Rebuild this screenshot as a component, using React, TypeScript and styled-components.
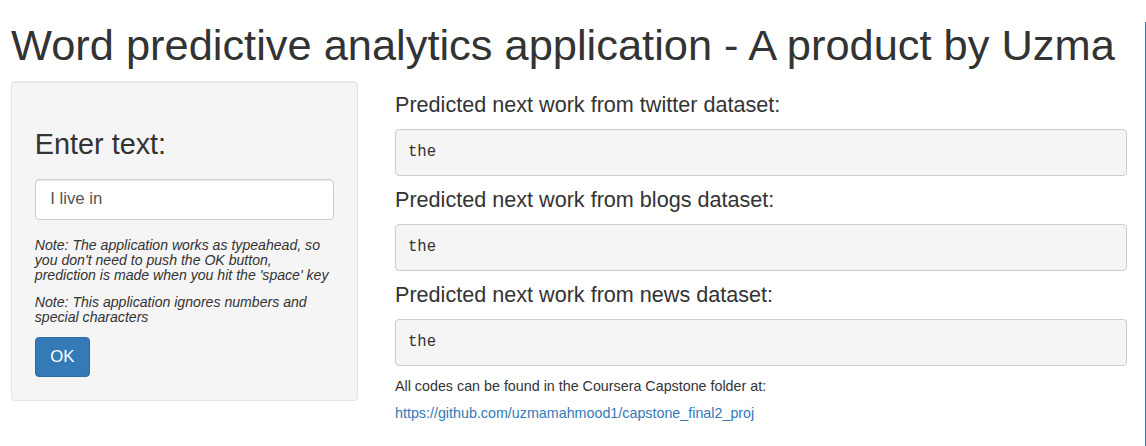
import React from "react";
import styled, { createGlobalStyle } from "styled-components";

const GlobalStyle = createGlobalStyle`
  html, body {
    margin: 0;
    padding: 0;
    background: #ffffff;
    overflow: hidden;
  }
  body {
    font-family: "Liberation Sans", Arial, Helvetica, sans-serif;
    font-size: 16.8px;
    line-height: 1.42857;
    color: #333333;
  }
  * { box-sizing: border-box; }
`;

const Page = styled.div`
  width: 1146px;
  min-height: 446px;
  padding: 0 18px 0 11px;
  border-right: 1px solid #337ab7;
`;

const Title = styled.h1`
  margin: 22px 0 11.5px;
  font-size: 43.4px;
  font-weight: 500;
  line-height: 1.1;
  color: #333333;
`;

const Row = styled.div`
  display: flex;
  align-items: flex-start;
  gap: 37px;
`;

const Well = styled.div`
  flex: 0 0 347px;
  width: 347px;
  padding: 22.8px;
  background: #f5f5f5;
  border: 1px solid #e3e3e3;
  border-radius: 4px;
  box-shadow: inset 0 1px 1px rgba(0, 0, 0, 0.05);
`;

const FormGroup = styled.div`
  margin-bottom: 18px;
`;

const Label = styled.label`
  display: inline-block;
  margin-bottom: 6px;
`;

const SideHeading = styled.h3`
  margin: 24px 0 12px;
  font-size: 28.8px;
  font-weight: 500;
  line-height: 1.1;
  color: #333333;
`;

const TextInput = styled.input`
  display: block;
  width: 100%;
  height: 40.8px;
  padding: 7.2px 14.4px;
  font-family: "Liberation Sans", Arial, sans-serif;
  font-size: 16.8px;
  color: #555555;
  background: #ffffff;
  border: 1px solid #cccccc;
  border-radius: 4px;
  box-shadow: inset 0 1px 1px rgba(0, 0, 0, 0.075);
  outline: none;
`;

const Note = styled.h6`
  margin: 12px 0;
  font-size: 14.1px;
  font-weight: 500;
  line-height: 15px;
  font-style: italic;
  color: #333333;
`;

const Button = styled.button`
  display: inline-block;
  margin-top: 0;
  padding: 7.2px 14.4px;
  font-family: "Liberation Sans", Arial, sans-serif;
  font-size: 16.8px;
  line-height: 1.42857;
  color: #ffffff;
  background: #337ab7;
  border: 1px solid #2e6da4;
  border-radius: 4px;
  cursor: pointer;
`;

const Main = styled.div`
  flex: 1 1 auto;
  min-width: 0;
`;

const ResultHeading = styled.h4`
  margin: 12px 0;
  font-size: 21.6px;
  font-weight: 500;
  line-height: 1.1;
  color: #333333;
`;

const Pre = styled.pre`
  display: block;
  margin: 0 0 12px;
  padding: 11.4px 12px;
  font-family: "Liberation Mono", "Courier New", monospace;
  font-size: 15.6px;
  line-height: 1.42857;
  color: #333333;
  background: #f5f5f5;
  border: 1px solid #cccccc;
  border-radius: 4px;
  white-space: pre-wrap;
`;

const Info = styled.p`
  margin: 11px 0 10px;
  font-size: 14.3px;
  line-height: 16px;
  color: #333333;
`;

const Link = styled.a`
  color: #337ab7;
  text-decoration: none;
`;

const results = [
  { source: "twitter", word: "the" },
  { source: "blogs", word: "the" },
  { source: "news", word: "the" },
];

export default function App() {
  return (
    <>
      <GlobalStyle />
      <Page>
        <Title>Word predictive analytics application - A product by Uzma</Title>
        <Row>
          <Well>
            <FormGroup>
              <Label htmlFor="text">
                <SideHeading>Enter text:</SideHeading>
              </Label>
              <TextInput id="text" type="text" defaultValue="I live in" />
            </FormGroup>
            <Note>
              Note: The application works as typeahead, so you don't need to push the OK button,
              prediction is made when you hit the 'space' key
            </Note>
            <Note>Note: This application ignores numbers and special characters</Note>
            <Button type="button">OK</Button>
          </Well>
          <Main>
            {results.map((r) => (
              <React.Fragment key={r.source}>
                <ResultHeading>Predicted next work from {r.source} dataset:</ResultHeading>
                <Pre>{r.word}</Pre>
              </React.Fragment>
            ))}
            <Info>All codes can be found in the Coursera Capstone folder at:</Info>
            <Info>
              <Link href="#">https://github.com/uzmamahmood1/capstone_final2_proj</Link>
            </Info>
          </Main>
        </Row>
      </Page>
    </>
  );
}
